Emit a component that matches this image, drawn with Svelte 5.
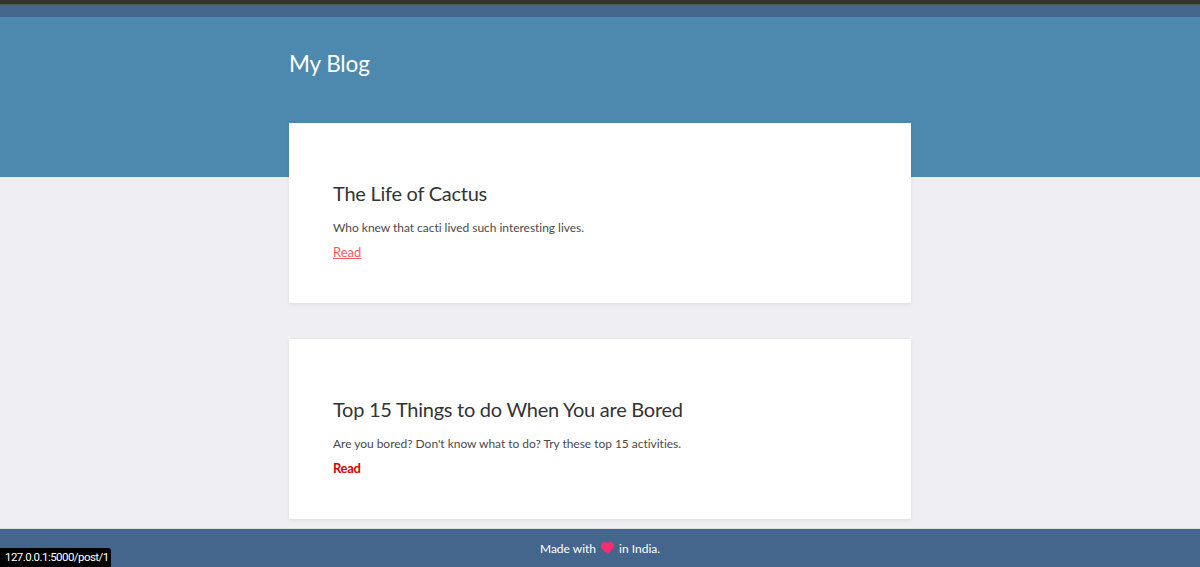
<script>
	let posts = [
		{ title: 'The Life of Cactus', text: 'Who knew that cacti lived such interesting lives.', hover: true },
		{ title: 'Top 15 Things to do When You are Bored', text: "Are you bored? Don't know what to do? Try these top 15 activities.", hover: false }
	]
</script>

<div class="page">
	<div class="topbar"></div>
	<nav class="nav"></nav>
	<header class="hero">
		<h1>My Blog</h1>
	</header>
	<main class="posts">
		{#each posts as post}
			<article class="card">
				<h2>{post.title}</h2>
				<p>{post.text}</p>
				<a href="#read" class:hover={post.hover}>Read</a>
			</article>
		{/each}
	</main>
	<footer class="foot">
		<span>Made with</span>
		<svg class="heart" viewBox="0 0 24 22" width="13" height="12" aria-hidden="true">
			<path d="M12 22 C5 16 0 12 0 6.5 C0 2.8 2.8 0 6.3 0 C8.5 0 10.8 1.2 12 3.2 C13.2 1.2 15.5 0 17.7 0 C21.2 0 24 2.8 24 6.5 C24 12 19 16 12 22 Z" />
		</svg>
		<span>in India.</span>
	</footer>
	<div class="status">127.0.0.1:5000/post/1</div>
</div>

<style>
	:global(body) {
		background-color: #eeeef3;
	}
	.page {
		position: relative;
		height: 567px;
		overflow: hidden;
		display: flex;
		flex-direction: column;
		font-family: Lato, "Open Sans", sans-serif;
	}
	.topbar {
		height: 4px;
		background-color: #333;
		border-bottom: 1px solid #555;
	}
	.nav {
		height: 12px;
		background-color: #44668c;
	}
	.hero {
		height: 160px;
		background-color: #4d89ae;
		padding-top: 33px;
		box-sizing: border-box;
	}
	h1 {
		width: 622px;
		margin: 0 auto;
		font-size: 22.5px;
		line-height: 28px;
		font-weight: 400;
		letter-spacing: -.1px;
		color: #fff;
	}
	.posts {
		width: 622px;
		margin: -54px auto 0;
		display: flex;
		flex-direction: column;
		gap: 36px;
		flex: 1;
		min-height: 0;
	}
	.card {
		height: 180px;
		flex-shrink: 0;
		box-sizing: border-box;
		padding: 58px 44px 0;
		background-color: #fff;
		box-shadow: 0 1px 4px rgba(0, 0, 0, .08);
	}
	h2 {
		margin: 0;
		font-size: 20px;
		line-height: 24px;
		font-weight: 400;
		letter-spacing: -.26px;
		color: #333;
	}
	p {
		margin: 14px 0 0;
		font-size: 12px;
		line-height: 18px;
		letter-spacing: -.03px;
		color: #4a4a4a;
	}
	a {
		display: inline-block;
		margin-top: 6px;
		font-size: 13px;
		line-height: 18px;
		font-weight: 700;
		letter-spacing: -.3px;
		color: #d80000;
		text-decoration: none;
	}
	a.hover {
		color: #ff5a5f;
		text-decoration: underline;
		font-weight: 400;
		letter-spacing: 0;
	}
	.foot {
		height: 39px;
		background-color: #44668c;
		color: #fff;
		font-size: 12px;
		display: flex;
		align-items: center;
		justify-content: center;
		gap: 5px;
		border-top: 1px solid #dcdce2;
		box-sizing: border-box;
		flex-shrink: 0;
	}
	.heart {
		fill: #ff2d6f;
	}
	.status {
		position: absolute;
		left: 0;
		bottom: 0;
		width: 111px;
		box-sizing: border-box;
		height: 19px;
		padding: 0 0 0 5px;
		white-space: nowrap;
		background-color: #000;
		color: #fff;
		font-family: Roboto, sans-serif;
		font-size: 11.5px;
		letter-spacing: -.55px;
		line-height: 19px;
		border-top-right-radius: 3px;
	}
</style>
